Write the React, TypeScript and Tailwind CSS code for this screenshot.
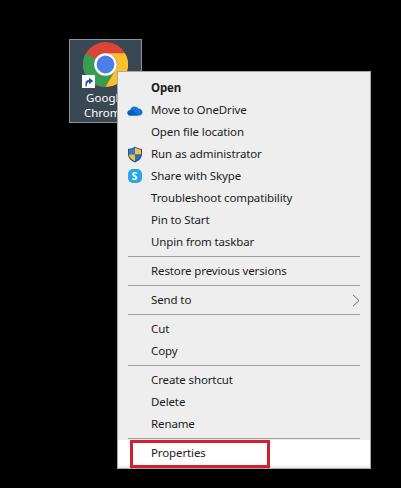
const font = "[font-family:'Noto_Sans',sans-serif]";

function OneDriveIcon() {
  return (
    <svg width="16" height="11" viewBox="0 0 17 12">
      <path d="M3.5 11.500C1.500 11.500 .3 10.200.3 8.600c0-1.600 1.200-2.800 2.800-2.900C3.600 3.300 5.600 1.600 8 1.600c1.700 0 3.100.8 3.900 2.100C14.600 3.600 16.700 5.600 16.700 8c0 2-1.400 3.500-3.400 3.500z" fill="#0f78d4" />
      <path d="M3.200 11.500C1.500 11.500.3 10.200.3 8.600c0-1.600 1.200-2.800 2.800-2.900 1.600-.6 3.200-.2 4.400 1L12 11.500z" fill="#0a5fb4" />
    </svg>
  );
}

function ShieldIcon() {
  return (
    <svg width="16" height="17" viewBox="0 0 16 17">
      <path d="M8 .5C6 2 3.500 2.800 1 2.800V8c0 4 3 7 7 8.500 4-1.500 7-4.500 7-8.500V2.800C12.500 2.800 10 2 8 .5z" fill="#2b4f86" />
      <path d="M8 1.500V8.500H2V3.600C4 3.500 6.200 2.800 8 1.500z" fill="#2e7bd0" />
      <path d="M8 1.500C9.800 2.800 12 3.500 14 3.600V8.500H8z" fill="#f7c531" />
      <path d="M2 8.500H8V15.300C4.700 14 2.200 11.500 2 8.500z" fill="#f3c02c" />
      <path d="M8 8.500H14C13.800 11.500 11.300 14 8 15.300z" fill="#2a6cc0" />
    </svg>
  );
}

function SkypeIcon() {
  return (
    <div className="flex h-[14px] w-[14px] items-center justify-center rounded-[5px] bg-[#2aa6e8] text-[10px] font-bold leading-none text-white">
      S
    </div>
  );
}

function ChromeIcon() {
  return (
    <svg width="45" height="45" viewBox="0 0 48 48">
      <circle cx="24" cy="24" r="24" fill="#db4437" />
      <path d="M24 24 3.200 12A24 24 0 0 0 24 48l12-20.800z" fill="#3a9b52" />
      <path d="M24 12h20.800A24 24 0 0 1 24 48l12-20.800A12 12 0 0 0 24 12z" fill="#fbc02d" />
      <circle cx="24" cy="24" r="12" fill="#fff" />
      <circle cx="24" cy="24" r="9.500" fill="#4a7fe8" />
    </svg>
  );
}

function ShortcutBadge() {
  return (
    <div className="flex h-[13px] w-[13px] items-center justify-center bg-white">
      <svg width="10" height="10" viewBox="0 0 10 10">
        <path d="M1.500 9.500V6C1.500 4 3 3 5 3V.8L9.300 4 5 7.200V5C3.500 5 2.800 6.500 2.800 9.500z" fill="#1f4fa8" />
      </svg>
    </div>
  );
}

function Separator() {
  return <div className="mx-[10px] my-[3px] h-px bg-[#a0a0a0]" />;
}

function Item({ label, icon, bold, arrow }: { label: string; icon?: React.ReactNode; bold?: boolean; arrow?: boolean }) {
  return (
    <div className="flex h-[22px] items-center pr-[10px]">
      <div className="flex w-[33px] shrink-0 items-center justify-center">{icon}</div>
      <span className={`text-[11.5px] tracking-[-0.12px] text-[#1c1c1c] ${bold ? 'font-bold' : ''}`}>{label}</span>
      {arrow && (
        <svg className="ml-auto" width="8" height="13" viewBox="0 0 8 13">
          <path d="M1 .8 7 6.500 1 12.200" fill="none" stroke="#6a6a78" strokeWidth="1" />
        </svg>
      )}
    </div>
  );
}

export default function App() {
  return (
    <div className={`relative h-[488px] w-[401px] overflow-hidden bg-black ${font}`}>
      <div className="absolute left-[69px] top-[39px] flex h-[84px] w-[73px] flex-col items-center border border-[#8a949e] bg-[#3a4854]">
        <div className="relative mt-[2px]">
          <ChromeIcon />
          <div className="absolute left-[-1px] top-[33px]">
            <ShortcutBadge />
          </div>
        </div>
        <div className="mt-[3px] text-center text-[11.5px] leading-[15px] text-white">
          Google
          <br />
          Chrome
        </div>
      </div>

      <div className="absolute left-[117px] top-[71px] flex h-[398px] w-[254px] flex-col border border-[#a8a8a8] bg-[#eeeeee] pt-[5px]">
        <Item label="Open" bold />
        <Item label="Move to OneDrive" icon={<OneDriveIcon />} />
        <Item label="Open file location" />
        <Item label="Run as administrator" icon={<ShieldIcon />} />
        <Item label="Share with Skype" icon={<SkypeIcon />} />
        <Item label="Troubleshoot compatibility" />
        <Item label="Pin to Start" />
        <Item label="Unpin from taskbar" />
        <Separator />
        <Item label="Restore previous versions" />
        <Separator />
        <Item label="Send to" arrow />
        <Separator />
        <Item label="Cut" />
        <Item label="Copy" />
        <Separator />
        <Item label="Create shortcut" />
        <Item label="Delete" />
        <Item label="Rename" />
        <Separator />
        <div className="relative -mt-[2px] flex h-[26px] items-center bg-white">
          <span className="pl-[33px] text-[11.5px] tracking-[-0.12px] text-[#1c1c1c]">Properties</span>
          <div className="absolute left-[12px] top-0 h-[28px] w-[140px] border-[3px] border-[#d3202e]" />
        </div>
      </div>
    </div>
  );
}
